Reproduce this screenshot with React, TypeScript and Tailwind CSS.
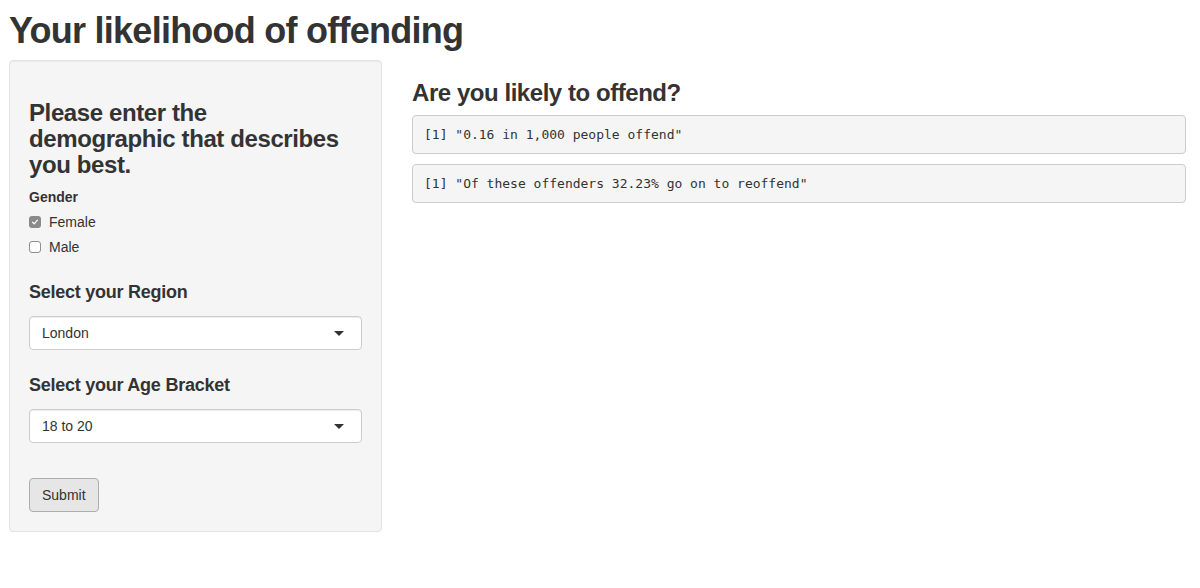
import React from "react";

function Caret() {
  return (
    <svg width="10" height="6" viewBox="0 0 10 6" className="absolute right-[17px] top-[14px]">
      <path d="M0 0 L10 0 L5 5 Z" fill="#333" />
    </svg>
  );
}

function Select({ value }: { value: string }) {
  return (
    <div className="relative h-[34px] w-full rounded-[4px] border border-[#cccccc] bg-white shadow-[inset_0_1px_1px_rgba(0,0,0,0.075)]">
      <div className="pl-[12px] text-[14px] leading-[32px] text-[#333]">{value}</div>
      <Caret />
    </div>
  );
}

function CheckRow({ checked, label }: { checked: boolean; label: string }) {
  return (
    <div className="flex h-[20px] items-center">
      {checked ? (
        <div className="flex h-[12px] w-[12px] items-center justify-center rounded-[3px] bg-[#8a8a8a]">
          <svg width="8" height="8" viewBox="0 0 8 8">
            <path d="M1.6 4.2 L3.3 5.8 L6.4 2.2" stroke="#fff" strokeWidth="1.2" fill="none" strokeLinecap="round" strokeLinejoin="round" />
          </svg>
        </div>
      ) : (
        <div className="h-[12px] w-[12px] rounded-[3px] border border-[#8f8f8f] bg-white" />
      )}
      <span className="ml-[8px] text-[14px] text-[#333]">{label}</span>
    </div>
  );
}

const mono = { fontFamily: '"DejaVu Sans Mono", Menlo, monospace' };

export default function App() {
  return (
    <div
      className="min-h-[588px] bg-white pl-[9px] pr-[14px] text-[#333]"
      style={{ fontFamily: '"Liberation Sans", Arial, sans-serif' }}
    >
      <h1 className="pt-[11px] text-[36px] font-bold leading-[40px] tracking-[-0.75px] text-[#333]">
        Your likelihood of offending
      </h1>
      <div className="mt-[9px] flex gap-[30px]">
        <div className="w-[373px] shrink-0 rounded-[4px] border border-[#e3e3e3] bg-[#f5f5f5] px-[19px] pb-[19px] pt-[39px] shadow-[inset_0_1px_1px_rgba(0,0,0,0.05)]">
          <h3 className="whitespace-nowrap text-[24px] font-bold leading-[26px] tracking-[-0.4px] text-[#333]">
            Please enter the
            <br />
            demographic that describes
            <br />
            you best.
          </h3>
          <div className="mt-[9px] text-[14px] font-bold leading-[20px]">Gender</div>
          <div className="mt-[5px] flex flex-col gap-[5px]">
            <CheckRow checked label="Female" />
            <CheckRow checked={false} label="Male" />
          </div>
          <h4 className="mt-[25px] text-[18px] font-bold leading-[20px] tracking-[-0.25px]">Select your Region</h4>
          <div className="mt-[14px]">
            <Select value="London" />
          </div>
          <h4 className="mt-[25px] text-[18px] font-bold leading-[20px] tracking-[-0.25px]">Select your Age Bracket</h4>
          <div className="mt-[14px]">
            <Select value="18 to 20" />
          </div>
          <button className="mt-[35px] h-[34px] rounded-[4px] border border-[#adadad] bg-[#e6e6e6] px-[12px] text-[14px] text-[#333]">
            Submit
          </button>
        </div>
        <div className="flex-1">
          <h3 className="mt-[20px] text-[24px] font-bold leading-[26px] tracking-[-0.45px]">Are you likely to offend?</h3>
          <div className="mt-[9px] flex flex-col gap-[10px] text-[13px] text-[#333]">
            <pre style={mono} className="rounded-[4px] border border-[#cccccc] bg-[#f5f5f5] px-[11px] py-[9px] text-[13px] leading-[19px]">[1] "0.16 in 1,000 people offend"</pre>
            <pre style={mono} className="rounded-[4px] border border-[#cccccc] bg-[#f5f5f5] px-[11px] py-[9px] text-[13px] leading-[19px]">[1] "Of these offenders 32.23% go on to reoffend"</pre>
          </div>
        </div>
      </div>
    </div>
  );
}
